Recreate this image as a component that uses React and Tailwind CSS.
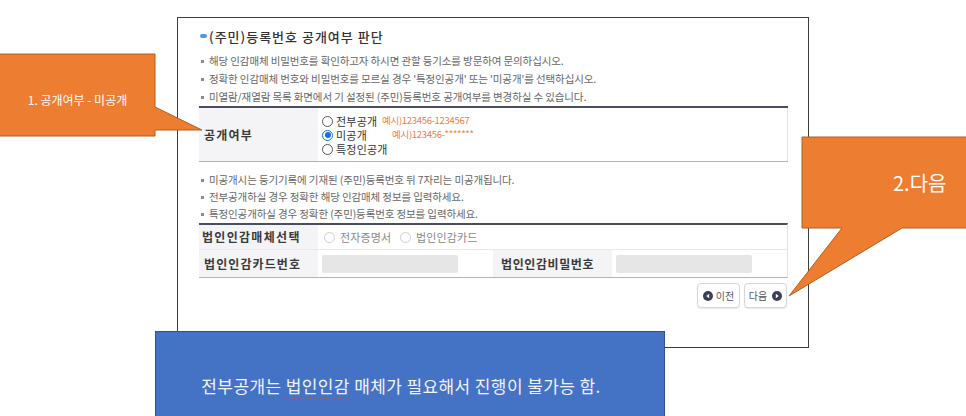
import React from "react";

const FONT = { fontFamily: '"Noto Sans CJK KR", "Noto Sans", sans-serif' };

function Bullet({ children, h = "h-[18px]" }) {
  return (
    <div className={`flex items-center ${h}`}>
      <span className="ml-[2px] w-[3px] h-[3px] bg-[#8a8a8a] flex-shrink-0" />
      <span className="ml-[5px] text-[10.5px] leading-none tracking-[-0.12px] text-[#666] whitespace-nowrap">{children}</span>
    </div>
  );
}

function Radio({ checked, disabled }) {
  if (checked) {
    return (
      <span className="w-[11px] h-[11px] rounded-full border border-[#1a6fe0] bg-white flex items-center justify-center flex-shrink-0">
        <span className="w-[6px] h-[6px] rounded-full bg-[#1a6fe0]" />
      </span>
    );
  }
  return (
    <span className={`block w-[11px] h-[11px] rounded-full border bg-white flex-shrink-0 ${disabled ? "border-[#cfcfcf]" : "border-[#555]"}`} />
  );
}

function ArrowIcon({ dir }) {
  return (
    <svg width="10" height="10" viewBox="0 0 10 10">
      <circle cx="5" cy="5" r="5" fill="#3b3f57" />
      {dir === "left"
        ? <polygon points="6.2,2.8 6.2,7.2 3.2,5" fill="#fff" />
        : <polygon points="3.8,2.8 3.8,7.2 6.8,5" fill="#fff" />}
    </svg>
  );
}

export default function App() {
  return (
    <div className="relative w-[966px] h-[416px] overflow-hidden bg-white" style={FONT}>
      {/* main frame */}
      <div className="pt-[17px] pl-[177px]">
        <div className="w-[632px] h-[331px] border border-[#3d3d3d] pl-[21px] pr-[20px] pt-[9px]">
          <div className="flex items-center h-[18px]">
            <span className="ml-[1px] w-[7px] h-[4px] rounded-full bg-[#4c9be0]" />
            <span className="ml-[2px] text-[13px] leading-none tracking-[1px] font-medium text-[#333]">(주민)등록번호 공개여부 판단</span>
          </div>

          <div className="mt-[7px]">
            <Bullet>해당 인감매체 비밀번호를 확인하고자 하시면 관할 등기소를 방문하여 문의하십시오.</Bullet>
            <Bullet>정확한 인감매체 번호와 비밀번호를 모르실 경우 '특정인공개' 또는 '미공개'를 선택하십시오.</Bullet>
            <Bullet>미열람/재열람 목록 화면에서 기 설정된 (주민)등록번호 공개여부를 변경하실 수 있습니다.</Bullet>
          </div>

          {/* table 1 */}
          <div className="flex border-t-2 border-t-[#4b4e5e] border-b border-b-[#b3b3b3]">
            <div className="w-[119px] bg-[#f4f4f6] flex items-center pl-[5px] text-[12px] font-semibold tracking-[1.2px] text-[#3a3a3a]">공개여부</div>
            <div className="flex-1 border-r border-[#e2e2e2] pt-[6px] pb-[5px] pl-[4px] text-[11px] leading-none tracking-[0.2px] text-[#333]">
              <div className="flex items-center h-[14px]">
                <Radio />
                <span className="ml-[3px] w-[46px]">전부공개</span>
                <span className="text-[9.5px] tracking-[-0.3px] text-[#f27b3c]">예시)123456-1234567</span>
              </div>
              <div className="flex items-center h-[14px]">
                <Radio checked />
                <span className="ml-[3px] w-[56px]">미공개</span>
                <span className="text-[9.5px] tracking-[-0.3px] text-[#f27b3c]">예시)123456-*******</span>
              </div>
              <div className="flex items-center h-[14px]">
                <Radio />
                <span className="ml-[3px]">특정인공개</span>
              </div>
            </div>
          </div>

          <div className="mt-[10px]">
            <Bullet h="h-[17px]">미공개시는 등기기록에 기재된 (주민)등록번호 뒤 7자리는 미공개됩니다.</Bullet>
            <Bullet h="h-[17px]">전부공개하실 경우 정확한 해당 인감매체 정보를 입력하세요.</Bullet>
            <Bullet h="h-[17px]">특정인공개하실 경우 정확한 (주민)등록번호 정보를 입력하세요.</Bullet>
          </div>

          {/* table 2 */}
          <div className="border-t-2 border-t-[#4b4e5e] border-b border-b-[#b3b3b3] border-r border-r-[#e2e2e2]">
            <div className="flex h-[25px] border-b border-[#e8e8e8]">
              <div className="w-[119px] bg-[#f4f4f6] flex items-center pl-[3px] text-[12px] font-semibold tracking-[1.3px] text-[#3a3a3a]">법인인감매체선택</div>
              <div className="flex-1 flex items-center pl-[6px] text-[11px] tracking-[0.1px] text-[#888]">
                <Radio disabled />
                <span className="ml-[5px]">전자증명서</span>
                <span className="ml-[9px]"><Radio disabled /></span>
                <span className="ml-[5px]">법인인감카드</span>
              </div>
            </div>
            <div className="flex h-[27px]">
              <div className="w-[119px] bg-[#f4f4f6] flex items-center pl-[5px] text-[12px] font-semibold tracking-[1.1px] text-[#3a3a3a]">법인인감카드번호</div>
              <div className="w-[175px] flex items-center pl-[4px]">
                <div className="w-[136px] h-[18px] bg-[#e6e6e6] rounded-[2px]" />
              </div>
              <div className="w-[119px] bg-[#f4f4f6] flex items-center pl-[8px] text-[12px] font-semibold tracking-[0.6px] text-[#3a3a3a]">법인인감비밀번호</div>
              <div className="flex-1 flex items-center pl-[4px]">
                <div className="w-[136px] h-[18px] bg-[#e6e6e6] rounded-[2px]" />
              </div>
            </div>
          </div>

          <div className="mt-[5px] flex justify-end gap-[4px] pr-[1px]">
            <button className="w-[43px] h-[25px] rounded-[4px] border border-[#d6d6d6] bg-white shadow-[0_1px_1px_rgba(0,0,0,0.08)] flex items-center justify-center gap-[3px] text-[10px] text-[#555]">
              <ArrowIcon dir="left" />
              <span>이전</span>
            </button>
            <button className="w-[43px] h-[25px] rounded-[4px] border border-[#d6d6d6] bg-white shadow-[0_1px_1px_rgba(0,0,0,0.08)] flex items-center justify-center gap-[5px] text-[10px] text-[#555]">
              <span>다음</span>
              <ArrowIcon dir="right" />
            </button>
          </div>
        </div>
      </div>

      {/* callout 1 */}
      <svg className="absolute left-0 top-0" width="210" height="145" viewBox="0 0 210 145">
        <polygon points="-2,54 155,54 155,107 202,130 155,130 155,136 -2,136" fill="#ED7D31" stroke="#B0601F" strokeWidth="1" />
      </svg>
      <div className="absolute left-0 top-[91px] w-[155px] text-center text-[12px] text-white">1. 공개여부 - 미공개</div>

      {/* callout 2 */}
      <svg className="absolute left-[780px] top-[130px]" width="186" height="175" viewBox="780 130 186 175">
        <polygon points="802,137 970,137 970,228 902,228 789,296 842,228 802,228" fill="#ED7D31" stroke="#B0601F" strokeWidth="1" />
      </svg>
      <div className="absolute left-[893px] top-[169px] text-[20px] text-white leading-[28px]">2.다음</div>

      {/* note box */}
      <div className="absolute left-[155px] top-[331px] w-[510px] h-[110px] bg-[#4472C4] border border-[#2F528F] flex items-center justify-center pr-[18px]">
        <span className="text-[17px] text-[#f2f4fa] tracking-[0.4px]">
          전부공개는 <span className="underline decoration-wavy decoration-[#e0403a] decoration-1 underline-offset-[3px]">법인인감</span> 매체가 필요해서 진행이 불가능 함.
        </span>
      </div>
    </div>
  );
}
